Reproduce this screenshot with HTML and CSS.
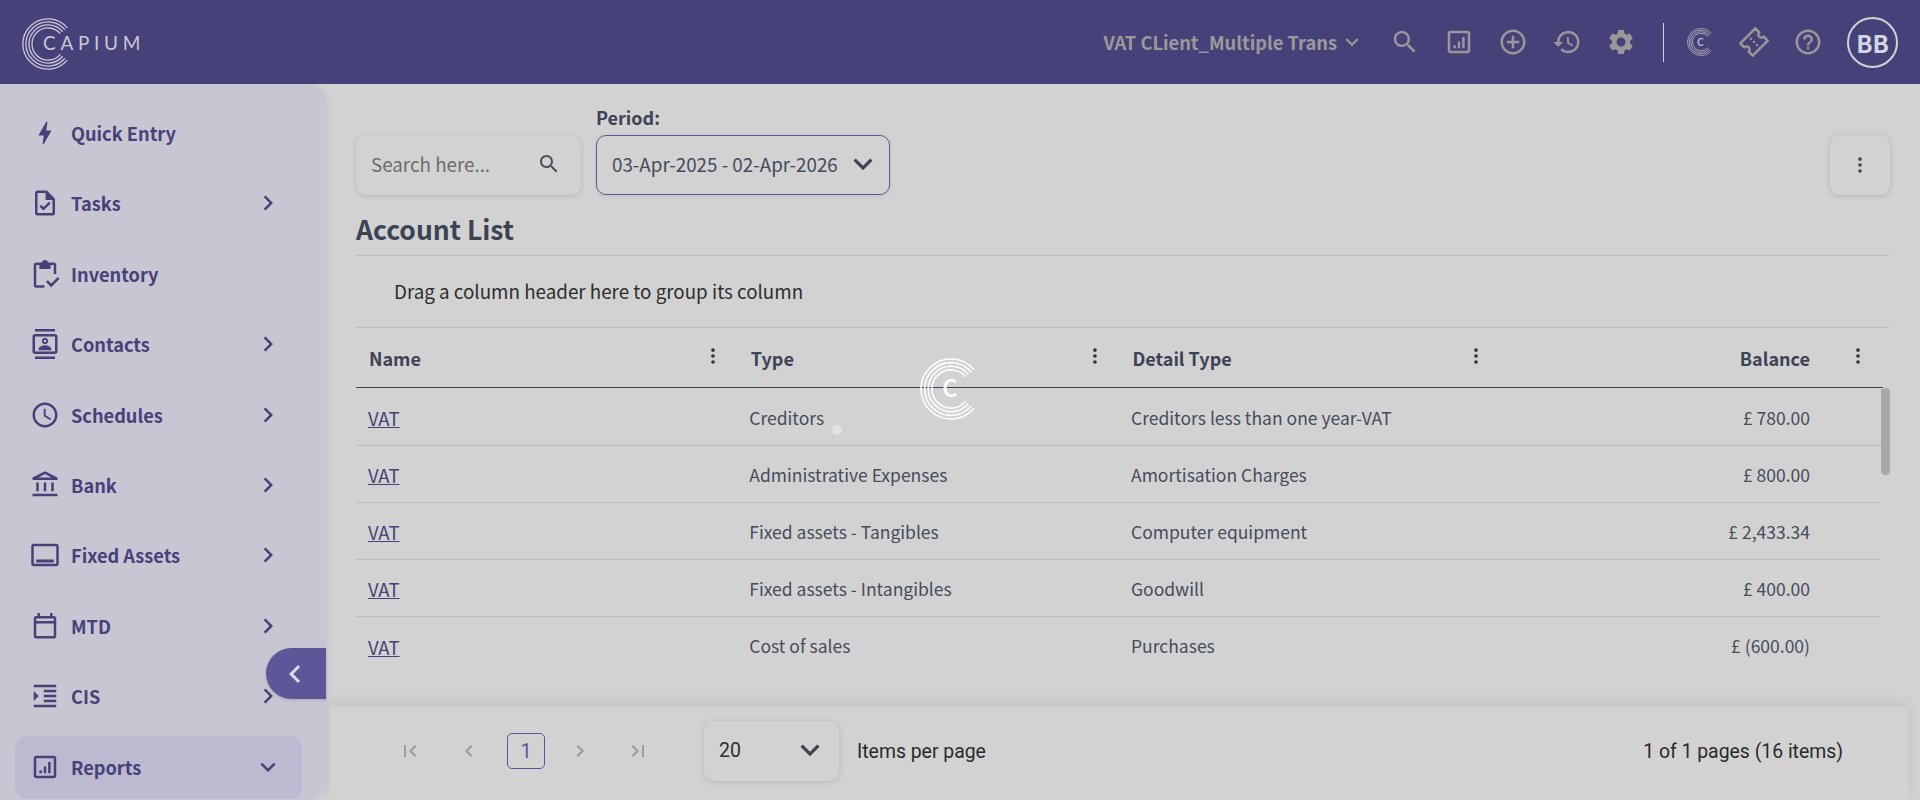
FILE: index.html
```html
<!DOCTYPE html>
<html lang="en">
<head>
  <meta charset="UTF-8">
  <meta name="viewport" content="width=device-width, initial-scale=1.0">
  <title>Account List</title>
  <link rel="stylesheet" href="styles.css">
</head>
<body>
  <svg class="sprites" width="0" height="0">
    <symbol id="rings" viewBox="0 0 60 60">
      <g fill="none" stroke="currentColor">
        <path d="M52.2 11.4A29 29 0 1 0 52.2 48.6"/>
        <path d="M49.5 13.6A25.5 25.5 0 1 0 49.5 46.4"/>
        <path d="M46.9 15.9A22 22 0 1 0 46.9 44.1"/>
        <path d="M44.2 18.1A18.5 18.5 0 1 0 44.2 41.9"/>
      </g>
    </symbol>
    <symbol id="chev-right" viewBox="0 0 24 24"><path d="M10 6L8.59 7.41 13.17 12l-4.58 4.59L10 18l6-6z"/></symbol>
    <symbol id="chev-down" viewBox="0 0 24 24"><path d="M16.59 8.59L12 13.17 7.41 8.59 6 10l6 6 6-6z"/></symbol>
    <symbol id="search" viewBox="0 0 24 24"><path d="M15.5 14h-.79l-.28-.27C15.41 12.59 16 11.11 16 9.5 16 5.91 13.09 3 9.5 3S3 5.91 3 9.5 5.91 16 9.5 16c1.61 0 3.09-.59 4.23-1.57l.27.28v.79l5 4.99L20.49 19l-4.99-5zm-6 0C7.01 14 5 11.99 5 9.5S7.01 5 9.5 5 14 7.01 14 9.5 11.99 14 9.5 14z"/></symbol>
    <symbol id="kebab" viewBox="0 0 24 24"><circle cx="12" cy="5.5" r="2"/><circle cx="12" cy="12" r="2"/><circle cx="12" cy="18.5" r="2"/></symbol>
    <symbol id="report" viewBox="0 0 24 24"><path d="M19 3H5c-1.1 0-2 .9-2 2v14c0 1.1.9 2 2 2h14c1.1 0 2-.9 2-2V5c0-1.1-.9-2-2-2zm0 16H5V5h14v14z"/><path d="M7.5 14.5h2v2.500h-2zM11 11.500h2V17h-2zM14.500 8h2v9h-2z"/></symbol>
  </svg>

  <header class="topbar">
    <div class="logo">
      <svg class="logo-rings"><use href="#rings"/></svg>
      <span class="logo-text">CAPIUM</span>
    </div>
    <div class="topbar-right">
      <div class="client">VAT CLient_Multiple Trans <svg class="client-chev" viewBox="0 0 24 24"><path d="M16.59 8.59L12 13.17 7.41 8.59 6 10l6 6 6-6z"/></svg></div>
      <svg class="top-icon"><use href="#search"/></svg>
      <svg class="top-icon"><use href="#report"/></svg>
      <svg class="top-icon" viewBox="0 0 24 24"><path d="M13 7h-2v4H7v2h4v4h2v-4h4v-2h-4V7zm-1-5C6.48 2 2 6.48 2 12s4.48 10 10 10 10-4.48 10-10S17.52 2 12 2zm0 18c-4.41 0-8-3.59-8-8s3.59-8 8-8 8 3.59 8 8-3.59 8-8 8z"/></svg>
      <svg class="top-icon" viewBox="0 0 24 24"><path d="M13 3c-4.97 0-9 4.03-9 9H1l3.89 3.89.07.14L9 12H6c0-3.87 3.13-7 7-7s7 3.13 7 7-3.13 7-7 7c-1.93 0-3.68-.79-4.94-2.06l-1.42 1.42C8.27 19.99 10.51 21 13 21c4.97 0 9-4.03 9-9s-4.03-9-9-9zm-1 5v5l4.28 2.54.72-1.21-3.5-2.08V8H12z"/></svg>
      <svg class="top-icon" viewBox="0 0 24 24"><path d="M19.14 12.94c.04-.3.06-.61.06-.94 0-.32-.02-.64-.07-.94l2.03-1.58c.18-.14.23-.41.12-.61l-1.92-3.32c-.12-.22-.37-.29-.59-.22l-2.39.96c-.5-.38-1.03-.7-1.62-.94l-.36-2.54c-.04-.24-.24-.41-.48-.41h-3.84c-.24 0-.43.17-.47.41l-.36 2.54c-.59.24-1.13.57-1.62.94l-2.39-.96c-.22-.08-.47 0-.59.22L2.74 8.87c-.12.21-.08.47.12.61l2.03 1.58c-.05.3-.09.63-.09.94s.02.64.07.94l-2.03 1.58c-.18.14-.23.41-.12.61l1.92 3.32c.12.22.37.29.59.22l2.39-.96c.5.38 1.03.7 1.62.94l.36 2.54c.05.24.24.41.48.41h3.84c.24 0 .44-.17.47-.41l.36-2.54c.59-.24 1.13-.56 1.62-.94l2.39.96c.22.08.47 0 .59-.22l1.92-3.32c.12-.22.07-.47-.12-.61l-2.01-1.58zM12 15.6c-1.98 0-3.6-1.62-3.6-3.6s1.62-3.6 3.6-3.6 3.6 1.62 3.6 3.6-1.62 3.6-3.6 3.6z"/></svg>
      <div class="top-divider"></div>
      <svg class="top-c" viewBox="0 0 60 60"><use href="#rings"/><text x="29" y="38" class="ring-c">C</text></svg>
      <svg class="top-icon" viewBox="0 0 24 24"><g transform="rotate(-45 12 12)"><path fill="none" stroke="currentColor" stroke-width="2" stroke-linejoin="round" d="M3.500 5h17v4.500a2.500 2.500 0 0 0 0 5V19h-17v-4.500a2.500 2.500 0 0 0 0-5z"/><circle cx="12" cy="8.500" r="1"/><circle cx="12" cy="12" r="1"/><circle cx="12" cy="15.500" r="1"/></g></svg>
      <svg class="top-icon" viewBox="0 0 24 24"><path d="M11 18h2v-2h-2v2zm1-16C6.48 2 2 6.48 2 12s4.48 10 10 10 10-4.48 10-10S17.52 2 12 2zm0 18c-4.41 0-8-3.59-8-8s3.59-8 8-8 8 3.59 8 8-3.59 8-8 8zm0-14c-2.21 0-4 1.79-4 4h2c0-1.100.9-2 2-2s2 .9 2 2c0 2-3 1.750-3 5h2c0-2.250 3-2.500 3-5 0-2.210-1.790-4-4-4z"/></svg>
      <div class="avatar">BB</div>
    </div>
  </header>

  <div class="layout">
    <aside class="sidebar">
      <a class="nav-item">
        <svg class="nav-icon" viewBox="0 0 24 24"><path d="M11 21h-1l1-7H7.500c-.58 0-.57-.32-.38-.66.19-.34.05-.08.07-.12C8.480 10.940 10.420 7.540 13 3h1l-1 7h3.500c.49 0 .56.33.47.51l-.07.15C12.960 17.550 11 21 11 21z"/></svg>
        <span>Quick Entry</span>
      </a>
      <a class="nav-item">
        <svg class="nav-icon" viewBox="0 0 24 24"><path d="M13.500 2H6a2 2 0 0 0-2 2v16a2 2 0 0 0 2 2h12a2 2 0 0 0 2-2V8.500L13.500 2zM18 20H6V4h6.500v5.500H18V20z"/><path d="M10.800 18l-3.300-3.300 1.400-1.400 1.900 1.900 4.300-4.300 1.400 1.400z"/></svg>
        <span>Tasks</span>
        <svg class="nav-chev"><use href="#chev-right"/></svg>
      </a>
      <a class="nav-item">
        <svg class="nav-icon" viewBox="0 0 24 24"><path d="M12 .8c-1.200 0-2.200.8-2.600 1.900H5a2 2 0 0 0-2 2V21a2 2 0 0 0 2 2h6.500v-2H5V4.700h2.500V8h9V4.700H19V12h2V4.700a2 2 0 0 0-2-2h-4.400C14.200 1.600 13.200.8 12 .8z"/><path d="M17 22.500l-4.200-4.200 1.400-1.400 2.800 2.800 5.200-5.200 1.400 1.400z"/></svg>
        <span>Inventory</span>
      </a>
      <a class="nav-item">
        <svg class="nav-icon" viewBox="0 0 24 24"><path d="M20 0H4v2h16V0zM4 24h16v-2H4v2zM20 4H4c-1.100 0-2 .9-2 2v12c0 1.100.9 2 2 2h16c1.100 0 2-.9 2-2V6c0-1.100-.9-2-2-2zm0 14H4V6h16v12z"/><path d="M12 12c1.380 0 2.500-1.120 2.500-2.500S13.380 7 12 7 9.500 8.120 9.500 9.500 10.620 12 12 12zm0-3.500c.55 0 1 .45 1 1s-.45 1-1 1-1-.45-1-1 .45-1 1-1zm5 7.490C17 13.900 13.690 13 12 13s-5 .9-5 2.990V17h10v-1.010z"/></svg>
        <span>Contacts</span>
        <svg class="nav-chev"><use href="#chev-right"/></svg>
      </a>
      <a class="nav-item">
        <svg class="nav-icon" viewBox="0 0 24 24"><path d="M11.990 2C6.470 2 2 6.480 2 12s4.470 10 9.990 10C17.520 22 22 17.520 22 12S17.520 2 11.990 2zM12 20c-4.420 0-8-3.580-8-8s3.580-8 8-8 8 3.580 8 8-3.580 8-8 8zm.5-13H11v6l5.250 3.150.75-1.230-4.500-2.670z"/></svg>
        <span>Schedules</span>
        <svg class="nav-chev"><use href="#chev-right"/></svg>
      </a>
      <a class="nav-item">
        <svg class="nav-icon" viewBox="0 0 24 24"><path d="M7 10H5v7h2v-7zm6 0h-2v7h2v-7zm9 9H2v2h20v-2zm-3-9h-2v7h2v-7zm-7-6.740L17.210 6H6.790L12 3.260M12 1L2 6v2h20V6L12 1z"/></svg>
        <span>Bank</span>
        <svg class="nav-chev"><use href="#chev-right"/></svg>
      </a>
      <a class="nav-item">
        <svg class="nav-icon" viewBox="0 0 24 24"><path d="M21 3H3c-1.100 0-2 .9-2 2v14c0 1.100.9 2 2 2h18c1.100 0 2-.9 2-2V5c0-1.100-.9-2-2-2zm0 16H3V5h18v14zM5 15.500h14V18H5z"/></svg>
        <span>Fixed Assets</span>
        <svg class="nav-chev"><use href="#chev-right"/></svg>
      </a>
      <a class="nav-item">
        <svg class="nav-icon" viewBox="0 0 24 24"><path d="M19 4h-1V1.500h-2V4H8V1.500H6V4H5a2 2 0 0 0-2 2v14a2 2 0 0 0 2 2h14a2 2 0 0 0 2-2V6a2 2 0 0 0-2-2zm0 16H5V10h14v10zm0-12H5V6h14v2z"/></svg>
        <span>MTD</span>
        <svg class="nav-chev"><use href="#chev-right"/></svg>
      </a>
      <a class="nav-item">
        <svg class="nav-icon" viewBox="0 0 24 24"><path d="M3 21h18v-2H3v2zM3 8v8l4-4-4-4zm8 9h10v-2H11v2zM3 3v2h18V3H3zm8 6h10V7H11v2zm0 4h10v-2H11v2z"/></svg>
        <span>CIS</span>
        <svg class="nav-chev"><use href="#chev-right"/></svg>
      </a>
      <a class="nav-item active">
        <svg class="nav-icon"><use href="#report"/></svg>
        <span>Reports</span>
        <svg class="nav-chev"><use href="#chev-down"/></svg>
      </a>
      <button class="collapse-btn">
        <svg viewBox="0 0 24 24"><path d="M15.410 7.410L14 6l-6 6 6 6 1.410-1.410L10.830 12z"/></svg>
      </button>
    </aside>

    <main class="main">
      <div class="content">
        <div class="toolbar">
          <div class="search-box">
            <span>Search here...</span>
            <svg><use href="#search"/></svg>
          </div>
          <div class="period">
            <label>Period:</label>
            <div class="period-select">
              <span>03-Apr-2025 - 02-Apr-2026</span>
              <svg><use href="#chev-down"/></svg>
            </div>
          </div>
          <button class="more-btn"><svg><use href="#kebab"/></svg></button>
        </div>

        <h1 class="page-title">Account List</h1>
        <div class="group-bar">Drag a column header here to group its column</div>

        <div class="grid-head">
          <div class="th">Name <svg><use href="#kebab"/></svg></div>
          <div class="th">Type <svg><use href="#kebab"/></svg></div>
          <div class="th">Detail Type <svg><use href="#kebab"/></svg></div>
          <div class="th th-num">Balance <svg><use href="#kebab"/></svg></div>
        </div>

        <div class="grid-body">
          <div class="row">
            <a class="td link">VAT</a><div class="td">Creditors</div><div class="td">Creditors less than one year-VAT</div><div class="td num">£ 780.00</div>
          </div>
          <div class="row">
            <a class="td link">VAT</a><div class="td">Administrative Expenses</div><div class="td">Amortisation Charges</div><div class="td num">£ 800.00</div>
          </div>
          <div class="row">
            <a class="td link">VAT</a><div class="td">Fixed assets - Tangibles</div><div class="td">Computer equipment</div><div class="td num">£ 2,433.34</div>
          </div>
          <div class="row">
            <a class="td link">VAT</a><div class="td">Fixed assets - Intangibles</div><div class="td">Goodwill</div><div class="td num">£ 400.00</div>
          </div>
          <div class="row">
            <a class="td link">VAT</a><div class="td">Cost of sales</div><div class="td">Purchases</div><div class="td num">£ (600.00)</div>
          </div>
          <div class="scroll-thumb"></div>
        </div>
      </div>

      <footer class="pager">
        <svg class="pg-icon first" viewBox="0 0 24 24"><path d="M18.410 16.590L13.820 12l4.590-4.590L17 6l-6 6 6 6zM6 6h2v12H6z"/></svg>
        <svg class="pg-icon" viewBox="0 0 24 24"><path d="M15.410 7.410L14 6l-6 6 6 6 1.410-1.410L10.830 12z"/></svg>
        <span class="pg-num">1</span>
        <svg class="pg-icon" viewBox="0 0 24 24"><path d="M10 6L8.590 7.410 13.170 12l-4.580 4.590L10 18l6-6z"/></svg>
        <svg class="pg-icon last" viewBox="0 0 24 24"><path d="M5.590 7.410L10.180 12l-4.590 4.590L7 18l6-6-6-6zM16 6h2v12h-2z"/></svg>
        <div class="pg-size">
          <span>20</span>
          <svg><use href="#chev-down"/></svg>
        </div>
        <span class="pg-label">Items per page</span>
        <span class="pg-info">1 of 1 pages (16 items)</span>
      </footer>
    </main>
  </div>

  <div class="loader">
    <svg class="loader-logo" viewBox="0 0 60 60"><use href="#rings"/><text x="29" y="38" class="ring-c">C</text></svg>
    <span class="loader-dot"></span>
  </div>
</body>
</html>
```

FILE: styles.css
```css
* {
  box-sizing: border-box;
}

html, body {
  margin: 0;
  padding: 0;
  height: 800px;
  overflow: hidden;
}

body {
  position: relative;
  display: flex;
  flex-direction: column;
  font-family: "Noto Sans CJK SC", "Noto Sans", sans-serif;
  background-color: #d2d2d2;
  color: #3c4354;
}

.sprites {
  position: absolute;
}

/* top bar */
.topbar {
  height: 84px;
  flex: none;
  display: flex;
  align-items: center;
  justify-content: space-between;
  padding: 0 22px 0 22px;
  background-color: #47417a;
}

.logo {
  display: flex;
  align-items: center;
  color: #c9c8d4;
}

.logo-rings {
  width: 52px;
  height: 52px;
  margin-top: 3px;
  stroke-width: 1.5;
}

.logo-text {
  margin-left: -31px;
  font-family: Lato, sans-serif;
  font-size: 19px;
  letter-spacing: 4.7px;
  line-height: 24px;
  margin-top: 2px;
}

.topbar-right {
  display: flex;
  align-items: center;
}

.client {
  display: flex;
  align-items: center;
  margin-right: 25px;
  font-size: 18.300px;
  font-weight: 600;
  line-height: 24px;
  color: #9a9a9a;
}

.client-chev {
  width: 26px;
  height: 26px;
  margin-left: 2px;
  fill: #9a9a9a;
}

.top-icon {
  width: 30px;
  height: 30px;
  margin-right: 24px;
  fill: #989898;
  color: #989898;
}

.top-divider {
  width: 1px;
  height: 39px;
  margin: 0 23px 0 3px;
  background-color: #d2d2d2;
}

.top-c {
  width: 28px;
  height: 28px;
  margin-right: 24px;
  color: #a3a2b0;
  stroke-width: 2;
}

.ring-c {
  font-family: "Noto Sans CJK SC", sans-serif;
  font-size: 23px;
  font-weight: 500;
  text-anchor: middle;
  fill: currentColor;
  stroke: none;
}

.top-c .ring-c {
  fill: #c4c3d2;
}

.avatar {
  width: 51px;
  height: 51px;
  display: flex;
  align-items: center;
  justify-content: center;
  border: 2.5px solid #d2d2d2;
  border-radius: 50%;
  font-size: 24px;
  font-weight: 700;
  color: #d6d6e2;
}

/* sidebar */
.layout {
  flex: 1;
  min-height: 0;
  display: flex;
}

.sidebar {
  position: relative;
  width: 327px;
  flex: none;
  display: flex;
  flex-direction: column;
  gap: 7.4px;
  padding: 18.5px 25px 0 15px;
  background-color: #c8c6d3;
  border-radius: 0 20px 20px 0;
  box-shadow: 2px 0 6px rgba(0, 0, 0, 0.03);
}

.nav-item {
  height: 63px;
  flex: none;
  display: flex;
  align-items: center;
  gap: 11px;
  padding: 0 19px 2px 15px;
  border-radius: 12px;
  font-size: 18.200px;
  font-weight: 600;
  line-height: 26px;
  color: #47417a;
}

.nav-item.active {
  background-color: #bcbad0;
}

.nav-icon {
  width: 30px;
  height: 30px;
  flex: none;
  fill: #47417a;
}

.nav-chev {
  width: 30px;
  height: 30px;
  margin-left: auto;
  fill: #47417a;
}

.collapse-btn {
  position: absolute;
  top: 564px;
  right: 1px;
  width: 60px;
  height: 51px;
  padding: 0 0 0 11px;
  display: flex;
  align-items: center;
  border: none;
  border-radius: 26px 0 0 26px;
  background-color: #5b5799;
  box-shadow: 0 1px 3px rgba(0, 0, 0, 0.15);
}

.collapse-btn svg {
  width: 36px;
  height: 36px;
  fill: #dcdbe6;
}

/* main area */
.main {
  flex: 1;
  min-width: 0;
  display: flex;
  flex-direction: column;
}

.content {
  flex: 1;
  min-height: 0;
  overflow: hidden;
  padding: 23px 30px 0 29px;
}

.toolbar {
  display: flex;
  align-items: flex-end;
}

.search-box {
  width: 225px;
  height: 60px;
  display: flex;
  align-items: center;
  justify-content: space-between;
  padding: 0 20px 2px 15px;
  margin-right: 15px;
  background-color: #d2d2d2;
  border-radius: 10px;
  box-shadow: 0 1px 5px rgba(0, 0, 0, 0.12);
  font-size: 18.800px;
  line-height: 24px;
  color: #6d6d6d;
}

.search-box svg {
  width: 24px;
  height: 24px;
  fill: #4a4f5c;
}

.period label {
  display: block;
  margin-bottom: 8px;
  font-size: 18px;
  font-weight: 600;
  line-height: 20px;
}

.period-select {
  width: 294px;
  height: 60px;
  display: flex;
  align-items: center;
  justify-content: space-between;
  padding: 0 7px 2px 15px;
  border: 1px solid #5b5799;
  border-radius: 10px;
  box-shadow: 0 1px 4px rgba(0, 0, 0, 0.1);
  font-size: 18.800px;
  line-height: 24px;
  color: #454c5c;
}

.period-select svg {
  width: 38px;
  height: 38px;
  fill: #3c4354;
}

.more-btn {
  width: 60px;
  height: 60px;
  margin-left: auto;
  padding: 0;
  display: flex;
  align-items: center;
  justify-content: center;
  border: none;
  border-radius: 10px;
  background-color: #d2d2d2;
  box-shadow: 0 1px 6px rgba(0, 0, 0, 0.14);
}

.more-btn svg {
  width: 22px;
  height: 22px;
  fill: #3c4354;
}

.page-title {
  margin: 16px 0 0;
  padding-bottom: 8px;
  border-bottom: 1px solid #bdbdbd;
  font-size: 26.500px;
  font-weight: 600;
  line-height: 36px;
  color: #3c4354;
}

.group-bar {
  height: 72px;
  display: flex;
  align-items: center;
  padding: 0 0 2px 38px;
  border-bottom: 1px solid #bdbdbd;
  font-size: 18.800px;
  color: #2e2e2e;
}

.grid-head,
.row {
  display: grid;
  grid-template-columns: repeat(3, 381.75px) 1fr;
}

.grid-head {
  height: 60px;
  margin-right: 7px;
  border-bottom: 1px solid #3c4354;
}

.th {
  display: flex;
  align-items: center;
  justify-content: space-between;
  padding: 0 14px 0 13px;
  font-size: 18px;
  font-weight: 600;
  color: #3c4354;
}

.th svg {
  width: 22px;
  height: 22px;
  margin-top: -4px;
  fill: #2e3240;
}

.th-num {
  justify-content: flex-end;
  gap: 37px;
}

.grid-body {
  position: relative;
  padding-top: 1px;
}

.row {
  height: 57px;
  margin-right: 9px;
  border-bottom: 1px solid #bdbdbd;
  font-size: 17.500px;
  color: #454c5c;
}

.row:nth-last-child(2) {
  border-bottom: none;
}

.td {
  display: flex;
  align-items: center;
  padding-left: 11.500px;
}

.td.link {
  padding: 2px 0 0 12px;
  font-size: 18.500px;
  color: #47417a;
  text-decoration: underline;
}

.td.num {
  justify-content: flex-end;
  padding-right: 71px;
}

.scroll-thumb {
  position: absolute;
  top: 0;
  right: 0;
  width: 9px;
  height: 87px;
  border-radius: 4px;
  background-color: #a9a9a9;
}

/* pager */
.pager {
  height: 93px;
  flex: none;
  display: flex;
  align-items: center;
  gap: 26px;
  margin: 0 12px 0 2px;
  padding: 0 65px 5px 69px;
  box-shadow: 0 -4px 12px rgba(0, 0, 0, 0.07);
  font-family: Roboto, sans-serif;
}

.pg-icon {
  width: 24px;
  height: 24px;
  flex: none;
  fill: #9a9a9a;
}

.pg-icon.first {
  margin-right: 9px;
}

.pg-icon.last {
  margin-left: 8px;
}

.pg-num {
  width: 38px;
  height: 36px;
  margin-right: -3px;
  display: flex;
  align-items: center;
  justify-content: center;
  border: 1px solid #5b5799;
  border-radius: 5px;
  font-size: 20px;
  color: #5b5799;
}

.pg-size {
  width: 135px;
  height: 60px;
  margin-left: 28px;
  display: flex;
  align-items: center;
  justify-content: space-between;
  padding: 0 10px 2px 15px;
  border-radius: 10px;
  box-shadow: 0 1px 6px rgba(0, 0, 0, 0.12);
  font-size: 19.500px;
  color: #2e2e2e;
}

.pg-size svg {
  width: 38px;
  height: 38px;
  fill: #3c4354;
}

.pg-label {
  margin-left: -8px;
  font-size: 19.400px;
  color: #2a2a2a;
}

.pg-info {
  margin-left: auto;
  font-size: 19.400px;
  color: #2a2a2a;
}

/* busy spinner over the page */
.loader-logo {
  position: absolute;
  left: 920px;
  top: 358px;
  width: 62px;
  height: 62px;
  color: #ffffff;
  stroke-width: 1.500;
}

.loader-dot {
  position: absolute;
  left: 832px;
  top: 425px;
  width: 10px;
  height: 10px;
  border-radius: 50%;
  background-color: #e2e2e2;
}
```
